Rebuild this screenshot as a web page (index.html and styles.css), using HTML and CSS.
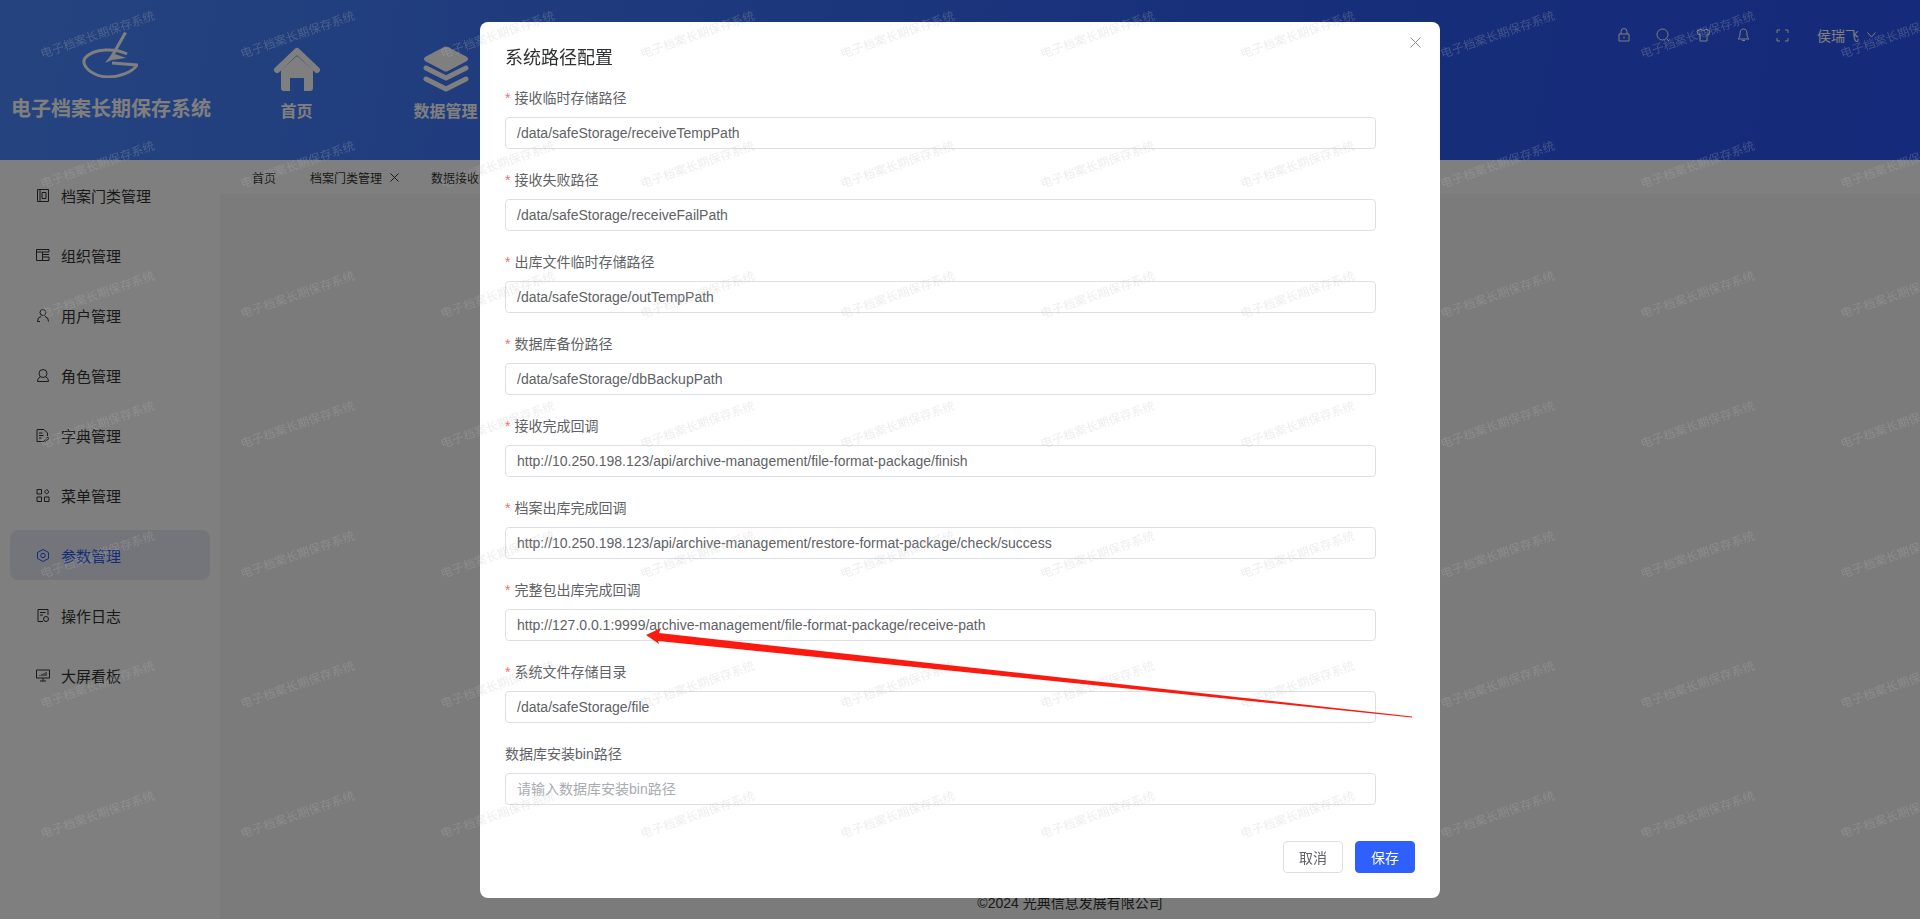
FILE: index.html
```html
<!DOCTYPE html>
<html lang="zh-CN">
<head>
<meta charset="UTF-8">
<meta name="viewport" content="width=device-width, initial-scale=1.0">
<title>电子档案长期保存系统</title>
<link rel="stylesheet" href="styles.css">
</head>
<body>
<div class="app">
  <header class="top-bar">
    <div class="brand">
      <svg class="brand-logo" width="56" height="46" viewBox="0 0 56 46">
        <path d="M42 0 L45 1 L33 22 L44 26 L30 28 L23 31 L29 23 Z" fill="#fff"/>
        <path d="M45 22 C34 16 12 16 3 26 C-1 33 8 44 26 45 C38 45 50 40 55 33 L30 31" fill="none" stroke="#fff" stroke-width="3"/>
      </svg>
      <div class="brand-name">电子档案长期保存系统</div>
    </div>
    <nav class="main-nav">
      <a class="nav-item">
        <svg width="46" height="46" viewBox="0 0 46 46">
          <path d="M3 24 L23 5 L43 24" fill="none" stroke="#fff" stroke-width="6" stroke-linecap="round" stroke-linejoin="round"/>
          <path d="M7 24 L23 10 L39 24 V42 Q39 45 36 45 H30 V32 H16 V45 H10 Q7 45 7 42 Z" fill="#fff"/>
        </svg>
        <span>首页</span>
      </a>
      <a class="nav-item">
        <svg width="46" height="46" viewBox="0 0 46 46">
          <path d="M21 1 Q23 0 25 1 L44 11 Q46 13 44 15 L25 25 Q23 26 21 25 L2 15 Q0 13 2 11 Z" fill="#fff"/>
          <path d="M3 22 L23 32 L43 22" fill="none" stroke="#fff" stroke-width="5" stroke-linecap="round" stroke-linejoin="round"/>
          <path d="M3 33 L23 43 L43 33" fill="none" stroke="#fff" stroke-width="5" stroke-linecap="round" stroke-linejoin="round"/>
        </svg>
        <span>数据管理</span>
      </a>
    </nav>
    <div class="top-tools">
      <svg width="12" height="14" viewBox="0 0 12 14"><path d="M3 6 V3.5 A3 3 0 0 1 9 3.5 V6 M1 6 H11 V13 H1 Z M6 8.5 V10.5" class="line"/></svg>
      <svg width="14" height="14" viewBox="0 0 14 14"><circle cx="6.5" cy="6.5" r="5.5" class="line"/><path d="M10.5 10.5 L13 13" class="line"/></svg>
      <svg width="15" height="14" viewBox="0 0 15 14"><path d="M5 1 L1 3 L2 6.5 L4 6 V13 H11 V6 L13 6.5 L14 3 L10 1 C9 3 6 3 5 1 Z" class="line"/></svg>
      <svg width="13" height="14" viewBox="0 0 13 14"><path d="M6.500 1 C3.500 1 3 3.500 3 6 C3 9 2 10 1 11 H12 C11 10 10 9 10 6 C10 3.500 9.500 1 6.500 1 Z M5 12.500 H8" class="line"/></svg>
      <svg width="13" height="13" viewBox="0 0 13 13"><path d="M1 4 V1 H4 M9 1 H12 V4 M12 9 V12 H9 M4 12 H1 V9" class="line"/></svg>
      <div class="user-name">侯瑞飞</div>
      <svg width="9" height="6" viewBox="0 0 9 6"><path d="M.5 .5 L4.500 5 L8.500 .5" class="line"/></svg>
    </div>
  </header>

  <div class="page-body">
    <aside class="side-menu">
      <div class="menu-item">
        <svg width="12" height="13" viewBox="0 0 12 13"><path d="M.5 .5 H11.500 V12.500 H.5 Z M3 .5 V12.500 M5 3.500 H9 V9.500 H5 Z" class="ink"/></svg>
        <span>档案门类管理</span>
      </div>
      <div class="menu-item">
        <svg width="14" height="12" viewBox="0 0 14 12"><path d="M.5 .5 H13 V3 H.5 Z M.5 3 V11.500 H13 V8 H6.500 V3 M6.500 8 V11.500 M6.500 5.500 H13" class="ink"/></svg>
        <span>组织管理</span>
      </div>
      <div class="menu-item">
        <svg width="12" height="13" viewBox="0 0 12 13"><circle cx="6" cy="3.500" r="3" class="ink"/><path d="M.5 12.500 Q.5 8 4 7.500 M8 7.500 Q11.500 8 11.500 12.500 M.5 12.500 H3" class="ink"/></svg>
        <span>用户管理</span>
      </div>
      <div class="menu-item">
        <svg width="12" height="13" viewBox="0 0 12 13"><circle cx="6" cy="4.500" r="4" class="ink"/><path d="M3 8 Q.5 9 .5 12.500 H11.500 Q11.500 9 9 8" class="ink"/></svg>
        <span>角色管理</span>
      </div>
      <div class="menu-item">
        <svg width="13" height="13" viewBox="0 0 13 13"><path d="M8 12.500 H.5 V.5 H7.500 L11 4 V7 M2.500 4 H6 M2.500 6.500 H7 M2.500 9 H5 M8 11 L11.500 8 L12.500 9.500 L9 12.500 Z" class="ink"/></svg>
        <span>字典管理</span>
      </div>
      <div class="menu-item">
        <svg width="13" height="13" viewBox="0 0 13 13"><path d="M.5 .5 H5 V5 H.5 Z M.5 8 H5 V12.500 H.5 Z M8 8 H12.500 V12.500 H8 Z M10.200 .5 L12.500 2.800 L10.200 5 L8 2.800 Z" class="ink"/></svg>
        <span>菜单管理</span>
      </div>
      <div class="menu-item active">
        <svg width="13" height="13" viewBox="0 0 13 13"><path d="M6.500 .5 L12 3.500 V9.500 L6.500 12.500 L1 9.500 V3.500 Z" class="ink"/><circle cx="6.500" cy="6.500" r="2.200" class="ink"/></svg>
        <span>参数管理</span>
      </div>
      <div class="menu-item">
        <svg width="12" height="13" viewBox="0 0 12 13"><path d="M6 12.500 H1 V.5 H11 V6 M3 3.500 H8.500 M3 6 H6" class="ink"/><circle cx="9" cy="10" r="2.500" class="ink"/></svg>
        <span>操作日志</span>
      </div>
      <div class="menu-item">
        <svg width="14" height="13" viewBox="0 0 14 13"><path d="M.5 1 H13.500 V9 H.5 Z M7 9 V12 M4 12 H10" class="ink"/><path d="M4 7 V6 M6 7 V5 M8 7 V4 M10 7 V3" class="ink"/></svg>
        <span>大屏看板</span>
      </div>
    </aside>
    <main class="work-area">
      <div class="tab-bar">
        <span class="tab">首页</span>
        <span class="tab">档案门类管理<svg class="tab-close" width="9" height="9" viewBox="0 0 9 9"><path d="M.5 .5 L8.500 8.500 M8.500 .5 L.5 8.500" class="ink"/></svg></span>
        <span class="tab">数据接收管理</span>
      </div>
      <div class="content-pane"></div>
      <footer class="copyright">©2024 光典信息发展有限公司</footer>
    </main>
  </div>
</div>

<div class="mask"></div>

<section class="dialog">
  <div class="dialog-head">
    <h2>系统路径配置</h2>
    <svg class="dialog-close" width="11" height="11" viewBox="0 0 11 11"><path d="M.5 .5 L10.500 10.500 M10.500 .5 L.5 10.500"/></svg>
  </div>
  <form class="dialog-body">
    <div class="form-item">
      <label class="required">接收临时存储路径</label>
      <input type="text" value="/data/safeStorage/receiveTempPath">
    </div>
    <div class="form-item">
      <label class="required">接收失败路径</label>
      <input type="text" value="/data/safeStorage/receiveFailPath">
    </div>
    <div class="form-item">
      <label class="required">出库文件临时存储路径</label>
      <input type="text" value="/data/safeStorage/outTempPath">
    </div>
    <div class="form-item">
      <label class="required">数据库备份路径</label>
      <input type="text" value="/data/safeStorage/dbBackupPath">
    </div>
    <div class="form-item">
      <label class="required">接收完成回调</label>
      <input type="text" value="http://10.250.198.123/api/archive-management/file-format-package/finish">
    </div>
    <div class="form-item">
      <label class="required">档案出库完成回调</label>
      <input type="text" value="http://10.250.198.123/api/archive-management/restore-format-package/check/success">
    </div>
    <div class="form-item">
      <label class="required">完整包出库完成回调</label>
      <input type="text" value="http://127.0.0.1:9999/archive-management/file-format-package/receive-path">
    </div>
    <div class="form-item">
      <label class="required">系统文件存储目录</label>
      <input type="text" value="/data/safeStorage/file">
    </div>
    <div class="form-item">
      <label>数据库安装bin路径</label>
      <input type="text" placeholder="请输入数据库安装bin路径">
    </div>
  </form>
  <div class="dialog-foot">
    <button type="button" class="btn">取消</button>
    <button type="button" class="btn btn-primary">保存</button>
  </div>
</section>

<svg class="arrow-mark" width="1920" height="919" viewBox="0 0 1920 919">
  <path d="M646 635 L661 628 L659 633 L1412 716.500 L1412 717.500 L658 641 L659 644 Z" fill="#fb1a10"/>
</svg>

<div class="watermark">
  <span>电子档案长期保存系统</span><span>电子档案长期保存系统</span><span>电子档案长期保存系统</span><span>电子档案长期保存系统</span><span>电子档案长期保存系统</span><span>电子档案长期保存系统</span><span>电子档案长期保存系统</span><span>电子档案长期保存系统</span><span>电子档案长期保存系统</span><span>电子档案长期保存系统</span>
  <span>电子档案长期保存系统</span><span>电子档案长期保存系统</span><span>电子档案长期保存系统</span><span>电子档案长期保存系统</span><span>电子档案长期保存系统</span><span>电子档案长期保存系统</span><span>电子档案长期保存系统</span><span>电子档案长期保存系统</span><span>电子档案长期保存系统</span><span>电子档案长期保存系统</span>
  <span>电子档案长期保存系统</span><span>电子档案长期保存系统</span><span>电子档案长期保存系统</span><span>电子档案长期保存系统</span><span>电子档案长期保存系统</span><span>电子档案长期保存系统</span><span>电子档案长期保存系统</span><span>电子档案长期保存系统</span><span>电子档案长期保存系统</span><span>电子档案长期保存系统</span>
  <span>电子档案长期保存系统</span><span>电子档案长期保存系统</span><span>电子档案长期保存系统</span><span>电子档案长期保存系统</span><span>电子档案长期保存系统</span><span>电子档案长期保存系统</span><span>电子档案长期保存系统</span><span>电子档案长期保存系统</span><span>电子档案长期保存系统</span><span>电子档案长期保存系统</span>
  <span>电子档案长期保存系统</span><span>电子档案长期保存系统</span><span>电子档案长期保存系统</span><span>电子档案长期保存系统</span><span>电子档案长期保存系统</span><span>电子档案长期保存系统</span><span>电子档案长期保存系统</span><span>电子档案长期保存系统</span><span>电子档案长期保存系统</span><span>电子档案长期保存系统</span>
  <span>电子档案长期保存系统</span><span>电子档案长期保存系统</span><span>电子档案长期保存系统</span><span>电子档案长期保存系统</span><span>电子档案长期保存系统</span><span>电子档案长期保存系统</span><span>电子档案长期保存系统</span><span>电子档案长期保存系统</span><span>电子档案长期保存系统</span><span>电子档案长期保存系统</span>
  <span>电子档案长期保存系统</span><span>电子档案长期保存系统</span><span>电子档案长期保存系统</span><span>电子档案长期保存系统</span><span>电子档案长期保存系统</span><span>电子档案长期保存系统</span><span>电子档案长期保存系统</span><span>电子档案长期保存系统</span><span>电子档案长期保存系统</span><span>电子档案长期保存系统</span>
  <span>电子档案长期保存系统</span><span>电子档案长期保存系统</span><span>电子档案长期保存系统</span><span>电子档案长期保存系统</span><span>电子档案长期保存系统</span><span>电子档案长期保存系统</span><span>电子档案长期保存系统</span><span>电子档案长期保存系统</span><span>电子档案长期保存系统</span><span>电子档案长期保存系统</span>
</div>
</body>
</html>
```

FILE: styles.css
```css
* {
    box-sizing: border-box;
}

html, body {
    margin: 0;
    height: 100%;
    overflow: hidden;
}

body {
    font-family: "Liberation Sans", "Noto Sans CJK SC", sans-serif;
    font-size: 14px;
    color: #333;
    background: #fff;
}

.app {
    height: 919px;
    display: flex;
    flex-direction: column;
}

/* top bar */
.top-bar {
    height: 160px;
    flex: none;
    display: flex;
    color: #fff;
    background: linear-gradient(100deg, #4a88ff 0%, #3c72fa 35%, #2e5cf5 70%, #2a55f4 100%);
}

.brand {
    width: 222px;
    flex: none;
    display: flex;
    flex-direction: column;
    align-items: center;
    padding-top: 32px;
}

.brand-logo {
    margin-left: -2px;
}

.brand-name {
    margin-top: 16px;
    font-size: 20px;
    font-weight: 700;
    line-height: 30px;
    white-space: nowrap;
}

.main-nav {
    display: flex;
}

.nav-item {
    width: 149px;
    display: flex;
    flex-direction: column;
    align-items: center;
    padding-top: 46px;
    font-size: 16px;
    font-weight: 700;
}

.nav-item span {
    margin-top: 8px;
    line-height: 24px;
}

.top-tools {
    margin-left: auto;
    height: 70px;
    padding-right: 44px;
    display: flex;
    align-items: center;
    gap: 26px;
}

.user-name {
    margin-right: -18px;
    margin-left: 2px;
    width: 42px;
    white-space: nowrap;
}

.line {
    fill: none;
    stroke: #fff;
    stroke-width: 1;
}

.ink {
    fill: none;
    stroke: #333;
    stroke-width: 1;
}

/* side menu */
.page-body {
    flex: 1;
    display: flex;
    min-height: 0;
}

.side-menu {
    width: 220px;
    flex: none;
    padding: 10px;
    background: #fff;
}

.menu-item {
    height: 50px;
    margin-bottom: 10px;
    padding-left: 26px;
    display: flex;
    align-items: center;
    gap: 11px;
    border-radius: 8px;
    font-size: 15px;
}

.menu-item svg {
    width: 14px;
    flex: none;
}

.menu-item.active {
    background: #e6eaf5;
    color: #2b57f0;
}

.menu-item.active .ink {
    stroke: #2b57f0;
}

/* main */
.work-area {
    flex: 1;
    display: flex;
    flex-direction: column;
    min-width: 0;
}

.tab-bar {
    height: 34px;
    flex: none;
    padding-left: 32px;
    display: flex;
    align-items: center;
    gap: 34px;
    font-size: 12px;
    background: #fff;
}

.tab {
    display: flex;
    align-items: center;
}

.tab-close {
    margin-left: 8px;
    margin-right: -2px;
}

.content-pane {
    flex: 1;
    background: #f6f6f6;
}

.copyright {
    height: 32px;
    flex: none;
    text-align: center;
    line-height: 32px;
    background: #f6f6f6;
}

/* modal */
.mask {
    position: fixed;
    inset: 0;
    background: rgba(0, 0, 0, 0.5);
}

.dialog {
    position: fixed;
    left: 480px;
    top: 22px;
    width: 960px;
    height: 876px;
    display: flex;
    flex-direction: column;
    border-radius: 8px;
    background: #fff;
}

.dialog-head {
    height: 65px;
    flex: none;
    padding: 24px 25px 0;
    position: relative;
}

.dialog-head h2 {
    margin: 0;
    font-size: 18px;
    font-weight: 400;
    line-height: 24px;
    color: #303133;
}

.dialog-close {
    position: absolute;
    top: 15px;
    right: 19px;
    fill: none;
    stroke: #8c8c8c;
    stroke-width: 1;
}

.dialog-body {
    flex: 1;
    min-height: 0;
    overflow: hidden;
    padding: 0 64px 0 25px;
}

.form-item {
    margin-bottom: 20px;
}

.form-item label {
    display: block;
    margin-bottom: 8px;
    line-height: 22px;
    color: #606266;
}

.form-item label.required::before {
    content: "*";
    margin-right: 4px;
    color: #f56c6c;
}

.form-item input {
    display: block;
    width: 100%;
    height: 32px;
    padding: 0 11px;
    border: 1px solid #dcdfe6;
    border-radius: 4px;
    font: inherit;
    color: #606266;
    outline: none;
}

.form-item input::placeholder {
    color: #a8abb2;
}

.dialog-foot {
    height: 57px;
    flex: none;
    padding-right: 25px;
    display: flex;
    justify-content: flex-end;
    gap: 12px;
}

.btn {
    width: 60px;
    height: 32px;
    padding: 0;
    border: 1px solid #dcdfe6;
    border-radius: 4px;
    background: #fff;
    color: #606266;
    font: inherit;
}

.btn-primary {
    border-color: #2f60ff;
    background: #2f60ff;
    color: #fff;
}

/* pasted annotation */
.arrow-mark {
    position: fixed;
    left: 0;
    top: 0;
    z-index: 3;
}

/* watermark */
.watermark {
    position: fixed;
    left: -3px;
    top: -32px;
    width: 2000px;
    display: grid;
    grid-template-columns: repeat(10, 200px);
    grid-auto-rows: 130px;
    z-index: 2;
    pointer-events: none;
}

.watermark span {
    display: flex;
    align-items: center;
    justify-content: center;
    font-size: 12px;
    color: rgba(190, 190, 190, 0.27);
    transform: rotate(-19deg);
    white-space: nowrap;
}
```
